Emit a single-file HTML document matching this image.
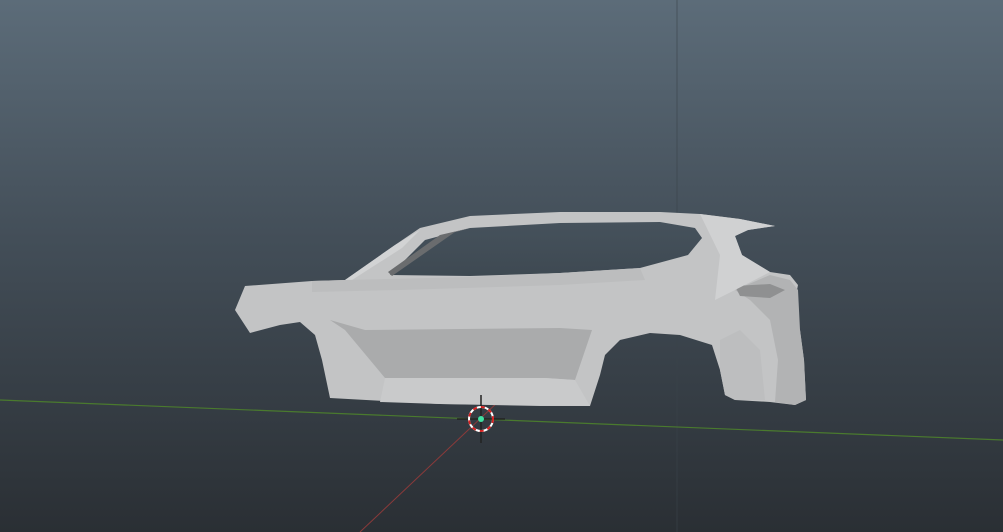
<!DOCTYPE html>
<html><head><style>
html,body{margin:0;padding:0;width:1003px;height:532px;overflow:hidden;background:#3a434b}
</style></head><body>
<svg width="1003" height="532" viewBox="0 0 1003 532" xmlns="http://www.w3.org/2000/svg">
<defs>
<linearGradient id="bg" x1="0" y1="0" x2="0" y2="1">
<stop offset="0" stop-color="#5c6c79"/>
<stop offset="0.45" stop-color="#434e58"/>
<stop offset="1" stop-color="#2a2f34"/>
</linearGradient>
<linearGradient id="win" x1="0" y1="0" x2="0" y2="1">
<stop offset="0" stop-color="#46525c"/>
<stop offset="1" stop-color="#3e4952"/>
</linearGradient>
</defs>
<rect width="1003" height="532" fill="url(#bg)"/>
<line x1="677" y1="0" x2="677" y2="532" stroke="#3a434a" stroke-width="1" opacity="0.6"/>
<line x1="0" y1="400" x2="1003" y2="440" stroke="#4a7a2e" stroke-width="1.2"/>
<line x1="360" y1="532" x2="500" y2="400" stroke="#8a3a3a" stroke-width="1"/>
<polygon fill="#c3c4c5" points="245,286 312,281 345,280 395,245 420,228 470,216 560,212 660,212 700,214 740,219 775,226 748,230 735,236 742,255 770,272 790,275 798,285 795,300 790,305 800,330 804,360 806,400 795,405 770,402 735,400 725,395 720,370 712,345 680,335 650,333 620,340 605,355 600,375 590,406 540,406 440,404 330,398 322,360 315,335 300,322 280,325 250,333 235,310"/>
<polygon fill="url(#win)" points="390,275 425,240 470,228 560,223 660,222 695,228 702,238 688,255 640,268 560,273 470,276"/>
<polygon fill="#6a6c6e" points="388,272 440,235 470,228 455,232 392,276"/>
<polygon fill="#d2d3d4" points="345,280 395,245 420,230 402,248 352,280"/>
<polygon fill="#bcbdbe" points="312,281 345,280 470,277 560,273 640,268 645,280 560,285 400,290 312,292"/>
<polygon fill="#aaabac" points="330,320 365,330 560,328 592,330 575,380 545,378 385,378 345,330"/>
<polygon fill="#c9cacb" points="385,378 545,378 575,380 590,406 440,404 380,402"/>
<polygon fill="#b2b3b4" points="735,290 770,275 790,280 798,290 800,330 804,360 806,400 795,405 775,402 778,360 770,320 750,300"/>
<polygon fill="#8f9091" points="735,286 770,284 785,290 770,298 740,296"/>
<polygon fill="#bdbebf" points="720,340 740,330 760,350 765,400 735,400 725,395 720,370"/>
<polygon fill="#d0d1d2" points="700,214 740,219 775,226 748,230 735,236 742,255 770,272 735,290 715,300 720,255"/>
<line x1="481" y1="395" x2="481" y2="443" stroke="#222" stroke-width="1.5"/>
<line x1="457" y1="419" x2="505" y2="419" stroke="#222" stroke-width="1.5"/>
<circle cx="481" cy="419" r="12" fill="none" stroke="#fff" stroke-width="2"/>
<circle cx="481" cy="419" r="12" fill="none" stroke="#d42020" stroke-width="2" stroke-dasharray="4 4"/>
<circle cx="481" cy="419" r="3" fill="#3fe0a0"/>
</svg>
</body></html>
